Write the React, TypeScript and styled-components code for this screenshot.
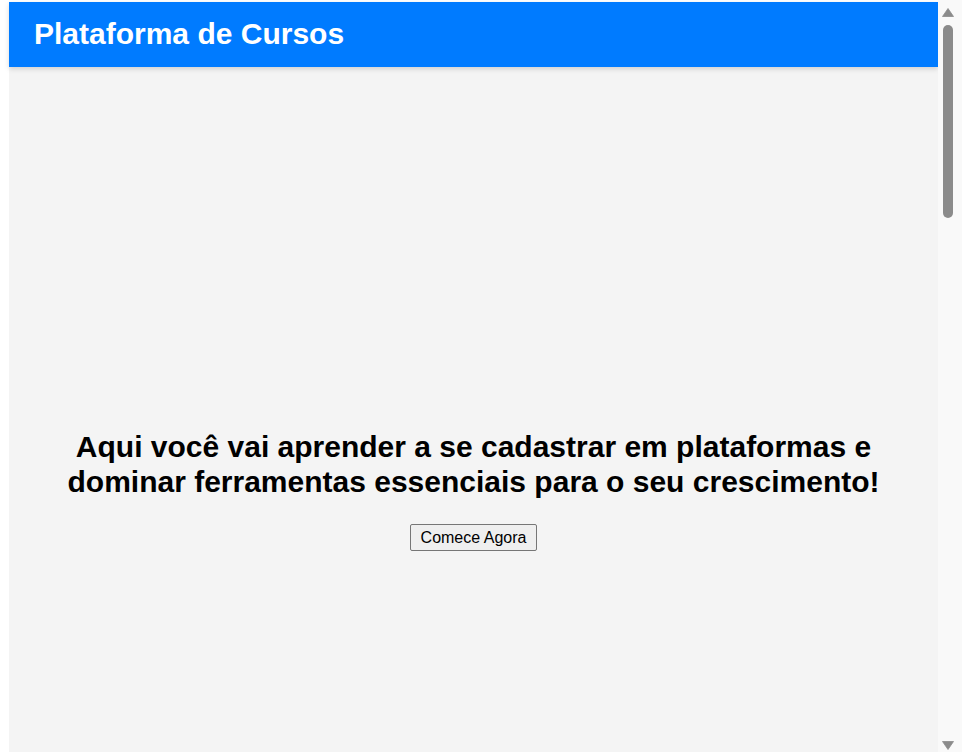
import React from "react";
import styled, { createGlobalStyle } from "styled-components";

const GlobalStyle = createGlobalStyle`
  html, body { margin: 0; padding: 0; height: 100%; overflow: hidden; background: #ffffff; }
  body { font-family: "Liberation Sans", Arial, sans-serif; }
  #root { height: 100%; }
`;

const Window = styled.div`
  display: flex;
  height: 100vh;
  background: #ffffff;
`;

const ScrollArea = styled.div`
  flex: 1;
  min-width: 0;
  overflow-y: auto;
  scrollbar-width: none;
  padding: 2px 0 0 9px;
  &::-webkit-scrollbar { display: none; }
`;

const Page = styled.div`
  background: #f4f4f4;
  min-height: 2798px;
  display: flex;
  flex-direction: column;
`;

const Header = styled.header`
  background: #007bff;
  color: #ffffff;
  padding: 15px 25px 16px;
  box-shadow: 0 2px 5px rgba(0, 0, 0, 0.15);
  position: relative;
`;

const Brand = styled.h1`
  margin: 0;
  font-size: 30px;
  font-weight: bold;
  line-height: normal;
`;

const Hero = styled.section`
  min-height: 846px;
  display: flex;
  flex-direction: column;
  align-items: center;
  justify-content: center;
  text-align: center;
  padding: 0 20px;
  box-sizing: border-box;
`;

const Title = styled.h2`
  margin: 0 0 25px 0;
  font-size: 30px;
  font-weight: bold;
  color: #000000;
  line-height: 35px;
`;

const StartButton = styled.button`
  font-family: "Liberation Sans", Arial, sans-serif;
  font-size: 16px;
  color: #000000;
  background: #efefef;
  border: 1px solid #767676;
  border-radius: 2px;
  padding: 4px 10px 3px;
  line-height: normal;
  cursor: pointer;
`;

const ScrollBar = styled.div`
  width: 24px;
  flex-shrink: 0;
  background: #f9f9f9;
  display: flex;
  flex-direction: column;
  align-items: flex-start;
  padding: 8px 0 2px 4px;
  box-sizing: border-box;
`;

const Thumb = styled.div`
  width: 10px;
  height: 193px;
  margin: 8px 0 0 1px;
  border-radius: 5px;
  background: #8b8b8b;
`;

const Spacer = styled.div`
  flex: 1;
`;

const Arrow = ({ down }: { down?: boolean }) => (
  <svg width="12" height="9" viewBox="0 0 12 9" style={{ display: "block" }}>
    <path
      d={down ? "M0.5 0.5 L11.5 0.5 L6 8.5 Z" : "M6 0.5 L11.5 8.5 L0.5 8.5 Z"}
      fill="#8b8b8b"
      stroke="#8b8b8b"
      strokeLinejoin="round"
      strokeWidth="0.8"
    />
  </svg>
);

export default function App() {
  return (
    <>
      <GlobalStyle />
      <Window>
        <ScrollArea>
          <Page>
            <Header>
              <Brand>Plataforma de Cursos</Brand>
            </Header>
            <Hero>
              <Title>
                Aqui você vai aprender a se cadastrar em plataformas e
                <br />
                dominar ferramentas essenciais para o seu crescimento!
              </Title>
              <StartButton>Comece Agora</StartButton>
            </Hero>
          </Page>
        </ScrollArea>
        <ScrollBar>
          <Arrow />
          <Thumb />
          <Spacer />
          <Arrow down />
        </ScrollBar>
      </Window>
    </>
  );
}
